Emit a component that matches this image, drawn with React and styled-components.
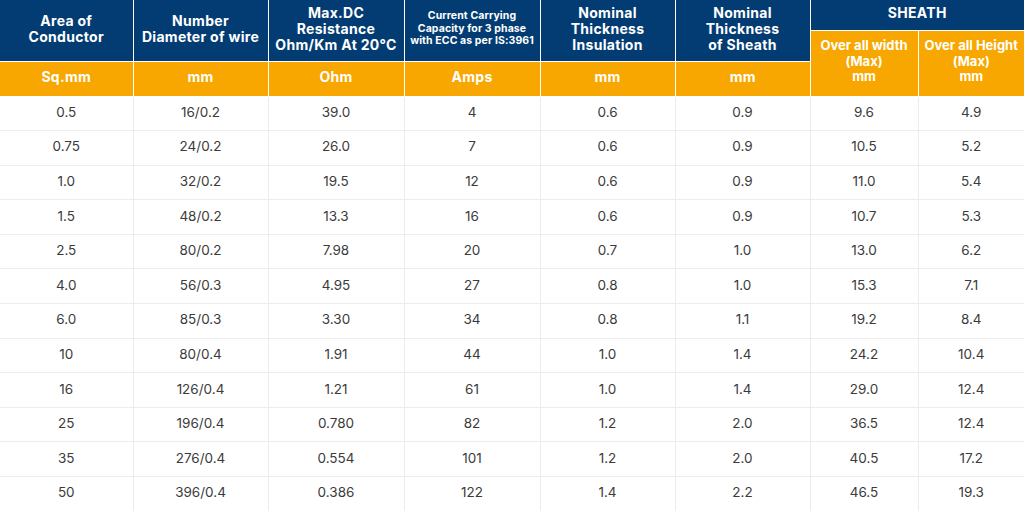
import styled, { createGlobalStyle } from "styled-components";

const GlobalStyle = createGlobalStyle`
    html, body {
        margin:0;
        padding:0;
        background:#ffffff;
    }
    body {
        font-family: Inter, "Open Sans", "Liberation Sans", sans-serif;
    }
`

const NAVY = '#033c72'
const AMBER = '#f8a700'

const sizes = {
    regular: { font: '14px', line: '16px', spacing: '0.3px' },
    compact: { font: '13px', line: '15.5px', spacing: '0px' },
    small: { font: '10.5px', line: '12.5px', spacing: '0.1px' },
}

const Table = styled.table`
    width:1024px;
    table-layout:fixed;
    border-collapse:collapse;
    border-spacing:0;
`

const HeadCell = styled.th`
    background-color: ${props => props.$tone === 'amber' ? AMBER : NAVY};
    color:#ffffff;
    font-weight:700;
    font-size: ${props => sizes[props.$size || 'regular'].font};
    line-height: ${props => sizes[props.$size || 'regular'].line};
    letter-spacing: ${props => sizes[props.$size || 'regular'].spacing};
    text-align:center;
    vertical-align:middle;
    padding:0 2px 3px;
    white-space:nowrap;
    overflow:hidden;
    border:1px solid rgba(255,255,255,0.28);
    border-top:none;
    &:first-child{ border-left:none; }
    &:last-child{ border-right:none; }
`

const HeadRow = styled.tr`
    height: ${props => props.$h}px;
`

const BodyRow = styled.tr`
    height:34.6px;
`

const Cell = styled.td`
    font-size:13.5px;
    color:#3b3b3b;
    text-align:center;
    vertical-align:middle;
    padding:0 0 3px;
    border:1px solid #ececec;
    &:first-child{ border-left:none; }
    &:last-child{ border-right:none; }
`

const columns = [133, 135, 136, 136, 135, 135, 108, 106]

const rows = [
    ['0.5', '16/0.2', '39.0', '4', '0.6', '0.9', '9.6', '4.9'],
    ['0.75', '24/0.2', '26.0', '7', '0.6', '0.9', '10.5', '5.2'],
    ['1.0', '32/0.2', '19.5', '12', '0.6', '0.9', '11.0', '5.4'],
    ['1.5', '48/0.2', '13.3', '16', '0.6', '0.9', '10.7', '5.3'],
    ['2.5', '80/0.2', '7.98', '20', '0.7', '1.0', '13.0', '6.2'],
    ['4.0', '56/0.3', '4.95', '27', '0.8', '1.0', '15.3', '7.1'],
    ['6.0', '85/0.3', '3.30', '34', '0.8', '1.1', '19.2', '8.4'],
    ['10', '80/0.4', '1.91', '44', '1.0', '1.4', '24.2', '10.4'],
    ['16', '126/0.4', '1.21', '61', '1.0', '1.4', '29.0', '12.4'],
    ['25', '196/0.4', '0.780', '82', '1.2', '2.0', '36.5', '12.4'],
    ['35', '276/0.4', '0.554', '101', '1.2', '2.0', '40.5', '17.2'],
    ['50', '396/0.4', '0.386', '122', '1.4', '2.2', '46.5', '19.3'],
]

const units = ['Sq.mm', 'mm', 'Ohm', 'Amps', 'mm', 'mm']

function App(){
    return(
        <>
            <GlobalStyle />
            <Table>
                <colgroup>
                    {columns.map((w, i) => <col key={i} style={{width: w}} />)}
                </colgroup>
                <thead>
                    <HeadRow $h={30}>
                        <HeadCell rowSpan={2}>Area of<br />Conductor</HeadCell>
                        <HeadCell rowSpan={2}>Number<br />Diameter of wire</HeadCell>
                        <HeadCell rowSpan={2}>Max.DC<br />Resistance<br />Ohm/Km At 20°C</HeadCell>
                        <HeadCell rowSpan={2} $size="small">Current Carrying<br />Capacity for 3 phase<br />with ECC as per IS:3961</HeadCell>
                        <HeadCell rowSpan={2}>Nominal<br />Thickness<br />Insulation</HeadCell>
                        <HeadCell rowSpan={2}>Nominal<br />Thickness<br />of Sheath</HeadCell>
                        <HeadCell colSpan={2}>SHEATH</HeadCell>
                    </HeadRow>
                    <HeadRow $h={31}>
                        <HeadCell rowSpan={2} $tone="amber" $size="compact">Over all width<br />(Max)<br />mm</HeadCell>
                        <HeadCell rowSpan={2} $tone="amber" $size="compact">Over all Height<br />(Max)<br />mm</HeadCell>
                    </HeadRow>
                    <HeadRow $h={35}>
                        {units.map((u, i) => <HeadCell key={i} $tone="amber">{u}</HeadCell>)}
                    </HeadRow>
                </thead>
                <tbody>
                    {rows.map((r, i) => (
                        <BodyRow key={i}>
                            {r.map((v, j) => <Cell key={j}>{v}</Cell>)}
                        </BodyRow>
                    ))}
                </tbody>
            </Table>
        </>
    )
}

export default App
